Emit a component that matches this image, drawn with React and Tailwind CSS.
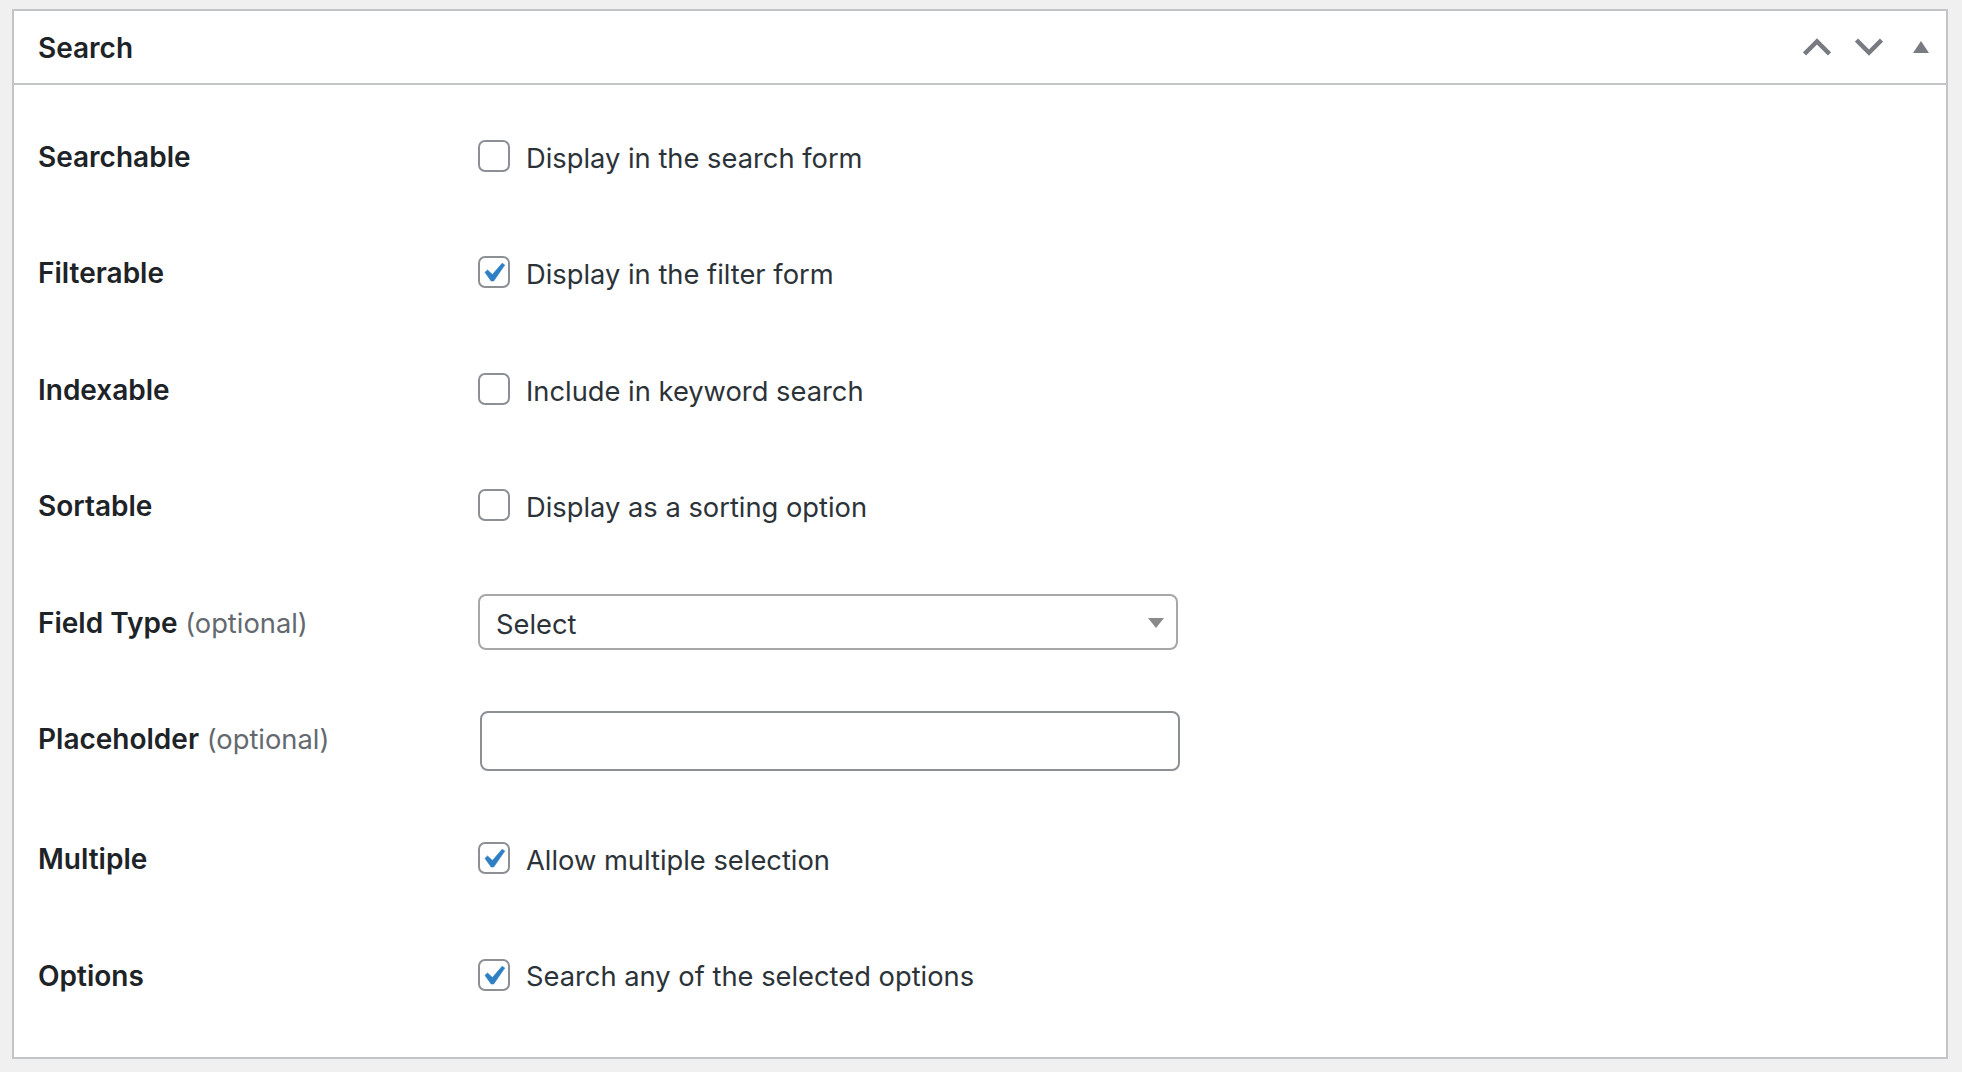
import React from "react";

const font = { fontFamily: "Inter, 'Liberation Sans', sans-serif" };

function Check({ checked, text, textTop = "top-[3px]" }) {
  return (
    <label className="flex items-center gap-4">
      <span className="relative block h-8 w-8 shrink-0">
        <input
          type="checkbox"
          defaultChecked={checked}
          className="block h-8 w-8 appearance-none rounded-[7px] border-2 border-[#8c8f94] bg-white"
        />
        {checked && (
          <svg viewBox="0 0 20 20" className="pointer-events-none absolute -left-1 -top-0.5 h-[38px] w-[38px]" fill="#2f7fc4" stroke="#2f7fc4" strokeWidth="0.35">
            <path d="M14.83 4.89l1.34.94-5.81 8.38H9.02L5.78 9.67l1.34-1.25 2.57 2.4z" />
          </svg>
        )}
      </span>
      <span className={`relative text-[27.3px] leading-8 text-[#2c3338] ${textTop}`}>{text}</span>
    </label>
  );
}

function Row({ label, optional, h, labelTop = "top-px", children }) {
  return (
    <div className={`flex items-center ${h}`}>
      <div className={`relative w-[440px] shrink-0 text-[28px] font-semibold leading-8 text-[#1d2327] ${labelTop}`}>
        {label}
        {optional && <span className="text-[27.3px] font-normal text-[#646970]"> (optional)</span>}
      </div>
      {children}
    </div>
  );
}

export default function App() {
  return (
    <div className="h-[1072px] bg-[#f0f0f1] pl-3 pr-[14px] pt-[9px]" style={font}>
      <div className="h-[1050px] border-2 border-[#c3c4c7] bg-white">
        <div className="flex h-[74px] items-center justify-between border-b-2 border-[#c3c4c7] pl-6 pr-[17px]">
          <h2 className="relative top-px text-[28px] font-semibold leading-8 text-[#1d2327]">Search</h2>
          <div className="flex items-center">
            <svg viewBox="0 0 28 18" className="h-[18px] w-7" fill="none" stroke="#787c82" strokeWidth="4.5">
              <path d="M1.5 16 14 3.5 26.5 16" />
            </svg>
            <svg viewBox="0 0 28 18" className="ml-6 h-[18px] w-7" fill="none" stroke="#787c82" strokeWidth="4.5">
              <path d="M1.5 2 14 14.5 26.5 2" />
            </svg>
            <svg viewBox="0 0 16 12" className="ml-[30px] h-3 w-4" fill="#787c82">
              <path d="M8 0 16 12H0z" />
            </svg>
          </div>
        </div>
        <div className="pl-6 pt-[13px]">
          <Row label="Searchable" h="h-[116px]"><Check text="Display in the search form" /></Row>
          <Row label="Filterable" h="h-[116px]"><Check checked text="Display in the filter form" /></Row>
          <Row label="Indexable" h="h-[117px]"><Check text="Include in keyword search" /></Row>
          <Row label="Sortable" h="h-[116px]"><Check text="Display as a sorting option" /></Row>
          <Row label="Field Type" optional h="h-[118px]">
            <div className="relative w-[700px]">
              <select className="block h-14 w-full appearance-none rounded-lg border-2 border-[#a7a7a7] bg-white px-4 pt-[7px] text-[27.3px] text-[#2c3338]" defaultValue="Select">
                <option>Select</option>
              </select>
              <svg viewBox="0 0 16 10" className="pointer-events-none absolute right-[14px] top-[24px] h-2.5 w-4" fill="#8a8a8a">
                <path d="M0 0H16L8 10z" />
              </svg>
            </div>
          </Row>
          <Row label="Placeholder" optional h="h-[120px]" labelTop="-top-0.5">
            <input type="text" className="ml-0.5 block h-[60px] w-[700px] rounded-lg border-2 border-[#8c8f94] bg-white" />
          </Row>
          <Row label="Multiple" h="h-[113px]"><Check checked text="Allow multiple selection" /></Row>
          <Row label="Options" h="h-[121px]"><Check checked textTop="top-[2px]" text="Search any of the selected options" /></Row>
        </div>
      </div>
    </div>
  );
}
